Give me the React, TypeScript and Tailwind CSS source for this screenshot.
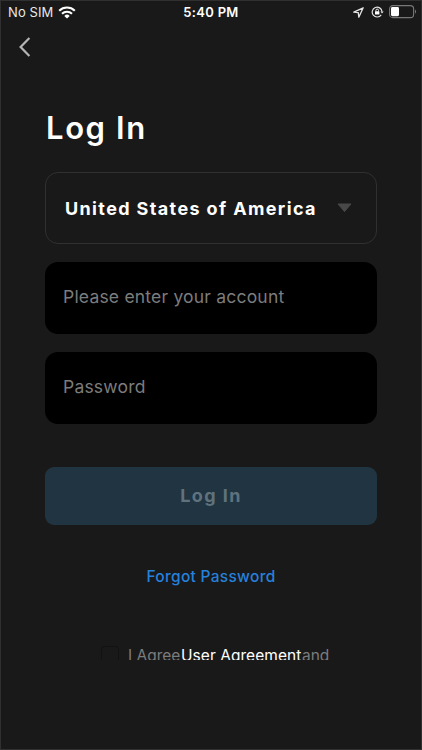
import { useState } from 'react';

function WifiIcon() {
  return (
    <svg width="18" height="13" viewBox="0 0 18 13" className="shrink-0">
      <g fill="none" stroke="#fff" strokeWidth="2.1">
        <path d="M1.2 4.7a11.2 11.2 0 0 1 15.6 0" />
        <path d="M4 7.7a7.2 7.2 0 0 1 10 0" />
      </g>
      <path d="M6.3 9.9a3.9 3.9 0 0 1 5.4 0L9 12.6z" fill="#fff" />
    </svg>
  );
}

function LocationIcon() {
  return (
    <svg width="11" height="11" viewBox="0 0 11 11" className="shrink-0">
      <path
        d="M10.2.8.8 5.2l4.5.5.5 4.5z"
        fill="none"
        stroke="#e4e4e4"
        strokeWidth="1.3"
        strokeLinejoin="round"
      />
    </svg>
  );
}

function RotationLockIcon() {
  return (
    <svg width="13" height="12" viewBox="0 0 13 12" className="shrink-0">
      <path
        d="M10.2 8.8A4.9 4.9 0 1 1 11 5.6"
        fill="none"
        stroke="#e4e4e4"
        strokeWidth="1.2"
      />
      <path d="M9.4 5.4h3.3L11 7.6z" fill="#e4e4e4" />
      <rect x="4" y="5.2" width="4.4" height="3.4" rx="0.5" fill="#fff" />
      <path d="M4.9 5.5V4.4a1.3 1.3 0 0 1 2.6 0v1.1" fill="none" stroke="#fff" strokeWidth="0.9" />
    </svg>
  );
}

function BatteryIcon() {
  return (
    <svg width="28" height="14" viewBox="0 0 28 14" className="shrink-0">
      <rect x="0.6" y="0.6" width="24" height="12" rx="3.2" fill="none" stroke="#777" strokeWidth="1.1" />
      <rect x="2" y="2" width="8" height="9.2" rx="1.4" fill="#fff" />
      <path d="M26 4.6v4.2c1.4-.7 1.4-3.5 0-4.2z" fill="#777" />
    </svg>
  );
}

function StatusBar() {
  return (
    <div className="grid h-[22px] grid-cols-3 items-center pl-[7px] pr-[4px] text-white">
      <div className="flex items-center gap-[5px]">
        <span className="text-[13px] leading-none tracking-[0.1px] text-[#e8e8e8]">No SIM</span>
        <WifiIcon />
      </div>
      <span className="pr-[3px] text-center text-[13px] font-semibold leading-none tracking-[0.3px]">
        5:40 PM
      </span>
      <div className="flex items-center justify-end">
        <LocationIcon />
        <span className="w-[7px]" />
        <RotationLockIcon />
        <span className="w-[5px]" />
        <BatteryIcon />
      </div>
    </div>
  );
}

const FIELD =
  'block h-[72px] w-full rounded-[13px] bg-black px-[18px] pb-[4px] text-[17.5px] tracking-[0.2px] text-white outline-none placeholder:text-[#7c7c7c]';

export default function App() {
  const [account, setAccount] = useState('');
  const [password, setPassword] = useState('');
  const [agreed, setAgreed] = useState(false);

  return (
    <div className="h-[750px] w-[422px] overflow-hidden border border-[#303030] bg-[#191919] font-['Inter','Liberation_Sans',sans-serif]">
      <StatusBar />

      <button type="button" aria-label="Back" className="ml-[18px] mt-[14px] block">
        <svg width="12" height="20" viewBox="0 0 12 20">
          <path d="M10.4 1 1.6 10l8.8 9" fill="none" stroke="#b4b4b4" strokeWidth="2.2" />
        </svg>
      </button>

      <main className="px-[44px] pt-[51px]">
        <h1 className="h-[40px] pl-px text-[31px] font-semibold leading-[40px] tracking-[1.6px] text-white">
          Log In
        </h1>

        <button
          type="button"
          className="mt-[24px] flex h-[72px] w-full items-center justify-between rounded-[13px] border border-[#303030] pl-[19px] pr-[24px]"
        >
          <span className="whitespace-nowrap text-[18px] font-bold tracking-[1.37px] text-white">
            United States of America
          </span>
          <svg width="15" height="10" viewBox="0 0 15 10">
            <path d="M1 1h13L7.5 8.6z" fill="#484848" stroke="#484848" strokeLinejoin="round" />
          </svg>
        </button>

        <input
          className={`${FIELD} mt-[18px]`}
          placeholder="Please enter your account"
          value={account}
          onChange={(e) => setAccount(e.target.value)}
        />
        <input
          className={`${FIELD} mt-[18px]`}
          type="password"
          placeholder="Password"
          value={password}
          onChange={(e) => setPassword(e.target.value)}
        />

        <button
          type="submit"
          className="mt-[43px] block h-[58px] w-full rounded-[9px] bg-[#203541] pb-[2px] text-[18px] font-bold tracking-[1.4px] text-[#5f727e]"
        >
          Log In
        </button>

        <a href="#" className="mt-[41px] block h-[22px] text-center text-[15.5px] font-medium leading-[22px] tracking-[0.3px] text-[#2681dc]">
          Forgot Password
        </a>
      </main>

      {/* agreement row, cut off at the bottom of the scroll area */}
      <div className="mt-[57px] flex h-[15px] items-start overflow-hidden pl-[100px] text-[15.5px] leading-[22px] text-[#7c7c7c]">
        <button
          type="button"
          aria-label="Agree"
          aria-pressed={agreed}
          onClick={() => setAgreed(!agreed)}
          className="mr-[9px] mt-px h-[18px] w-[18px] shrink-0 rounded-[3px] border border-[#121212]"
        />
        <span className="w-[53px] whitespace-nowrap">I Agree</span>
        <span className="w-[121px] whitespace-nowrap tracking-[0.05px] text-white">User Agreement</span>
        <span className="whitespace-nowrap">and</span>
      </div>
    </div>
  );
}
